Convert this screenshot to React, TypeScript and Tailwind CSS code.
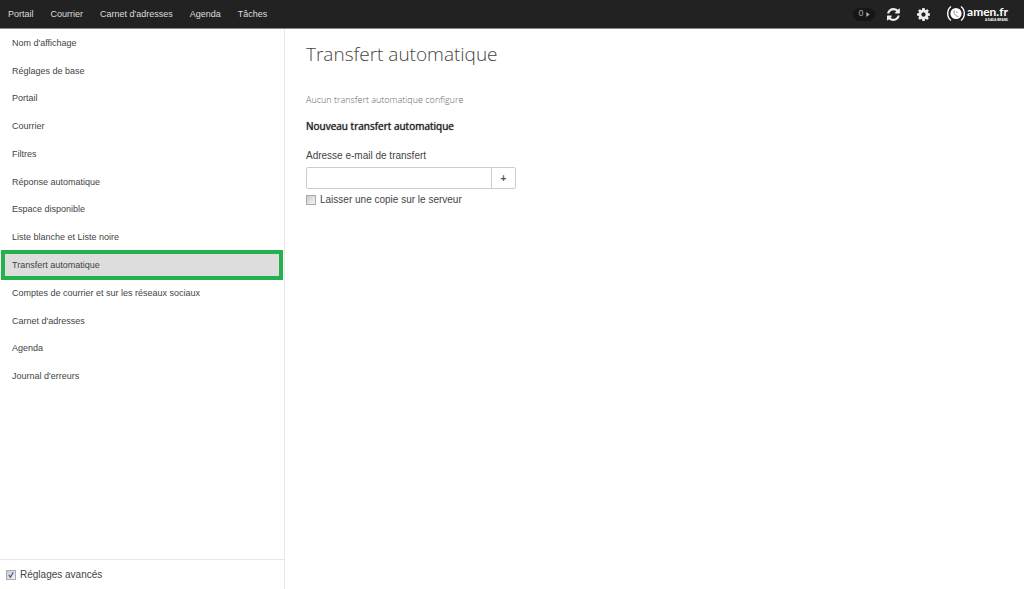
import React, { useState } from 'react';

const topLinks = ['Portail', 'Courrier', "Carnet d'adresses", 'Agenda', 'Tâches'];

const sections = [
  "Nom d'affichage",
  'Réglages de base',
  'Portail',
  'Courrier',
  'Filtres',
  'Réponse automatique',
  'Espace disponible',
  'Liste blanche et Liste noire',
  'Transfert automatique',
  'Comptes de courrier et sur les réseaux sociaux',
  "Carnet d'adresses",
  'Agenda',
  "Journal d'erreurs",
];

const RefreshIcon: React.FC = () => (
  <svg viewBox="0 0 1792 1792" className="w-[15px] h-[15px]" fill="currentColor" aria-hidden="true">
    <path d="M1511 1056q0 5-1 7-64 268-268 434.5t-478 166.5q-146 0-282.5-55t-243.5-157l-129 129q-19 19-45 19t-45-19-19-45v-448q0-26 19-45t45-19h448q26 0 45 19t19 45-19 45l-137 137q71 66 161 102t187 36q134 0 250-65t186-179q11-17 53-117 8-23 30-23h192q13 0 22.5 9.5t9.5 22.5zm25-800v448q0 26-19 45t-45 19h-448q-26 0-45-19t-19-45 19-45l138-138q-148-137-349-137-134 0-250 65t-186 179q-11 17-53 117-8 23-30 23h-199q-13 0-22.5-9.5t-9.5-22.5v-7q65-268 270-434.5t480-166.5q146 0 284 55.5t245 156.5l130-129q19-19 45-19t45 19 19 45z" />
  </svg>
);

const CogIcon: React.FC = () => (
  <svg viewBox="0 0 1792 1792" className="w-[15px] h-[15px]" fill="currentColor" aria-hidden="true">
    <path d="M1152 896q0-106-75-181t-181-75-181 75-75 181 75 181 181 75 181-75 75-181zm512-109v222q0 12-8 23t-20 13l-185 28q-19 54-39 91 35 50 107 138 10 12 10 25t-9 23q-27 37-99 108t-94 71q-12 0-26-9l-138-108q-44 23-91 38-16 136-29 186-7 28-36 28h-222q-14 0-24.5-8.5t-11.5-21.5l-28-184q-49-16-90-37l-141 107q-10 9-25 9-14 0-25-11-126-114-165-168-7-10-7-23 0-12 8-23 15-21 51-66.5t54-70.5q-27-50-41-99l-183-27q-13-2-21-12.5t-8-23.5v-222q0-12 8-23t19-13l186-28q14-46 39-92-40-57-107-138-10-12-10-24 0-10 9-23 26-36 98.5-107.5t94.5-71.5q13 0 26 10l138 107q44-23 91-38 16-136 29-186 7-28 36-28h222q14 0 24.5 8.5t11.5 21.5l28 184q49 16 90 37l142-107q9-9 24-9 13 0 25 10 129 119 165 170 7 8 7 22 0 12-8 23-15 21-51 66.5t-54 70.5q26 50 41 98l183 28q13 2 21 12.5t8 23.5z" />
  </svg>
);

const Logo: React.FC = () => (
  <a href="#" className="flex items-center gap-[2px] text-white">
    <svg viewBox="0 0 18 18" className="w-[18px] h-[18px]" aria-hidden="true">
      <circle cx="9" cy="8.500" r="5.600" fill="currentColor" />
      <path d="M4 1.500C-.4 5-.4 12 4 15.500M14 1.500c4.400 3.500 4.400 10.500 0 14" fill="none" stroke="currentColor" strokeWidth="1.400" />
      <path d="M7.300 5.300c-.8 3.200.8 5.800 4 6.200M9.500 6.500l.8 1.500" fill="none" stroke="#777" strokeWidth="0.900" />
    </svg>
    <span className="flex flex-col items-end">
      <span className="text-[12px] leading-[12px] font-bold font-['Lato',sans-serif]">amen.fr</span>
      <span className="text-[3px] leading-[4px] font-bold">A DADA BRAND</span>
    </span>
  </a>
);

type CheckboxProps = {
  label: string;
  defaultChecked?: boolean;
};

const Checkbox: React.FC<CheckboxProps> = ({ label, defaultChecked = false }) => {
  const [checked, setChecked] = useState(defaultChecked);

  return (
    <label className="flex items-center gap-1 text-[10px] leading-[14px]">
      <span className="relative flex">
        <input
          type="checkbox"
          checked={checked}
          onChange={(e) => setChecked(e.target.checked)}
          className="appearance-none w-[10px] h-[10px] border border-[#aaa] bg-linear-to-br from-[#c8cccf] to-[#f6f6f6]"
        />
        {checked && (
          <svg viewBox="0 0 10 10" className="absolute inset-0 pointer-events-none" aria-hidden="true">
            <path d="M2.800 4.800l1.700 2.500L7.300 2.200" fill="none" stroke="#4a5da8" strokeWidth="1.300" />
          </svg>
        )}
      </span>
      {label}
    </label>
  );
};

const App: React.FC = () => {
  const [active, setActive] = useState('Transfert automatique');

  return (
    <div className="min-h-screen flex flex-col bg-white text-[#444] font-['Liberation_Sans',Arial,sans-serif]">
      {/* Top bar */}
      <header className="h-[29px] shrink-0 flex items-center justify-between pl-2 pr-4 bg-[#222] border-b border-[#888]">
        <nav className="flex gap-[17px] text-[9px] leading-[14px] text-[#ddd]">
          {topLinks.map((link) => (
            <a key={link} href="#">{link}</a>
          ))}
        </nav>
        <div className="flex items-center text-[#eee]">
          <button type="button" className="flex items-center justify-center gap-[2px] w-[22px] h-[13px] mr-3 rounded-full bg-[#161616] text-[9px] text-[#aaa]">
            0
            <svg viewBox="0 0 4 6" className="w-[4px] h-[5px]" fill="currentColor" aria-hidden="true">
              <path d="M0 0l4 3-4 3z" />
            </svg>
          </button>
          <button type="button" aria-label="Actualiser" className="mr-[14px]"><RefreshIcon /></button>
          <button type="button" aria-label="Réglages" className="mr-4"><CogIcon /></button>
          <Logo />
        </div>
      </header>

      <div className="flex-1 flex">
        {/* Settings menu */}
        <aside className="w-[285px] shrink-0 flex flex-col justify-between border-r border-[#e8e8e8]">
          <ul className="h-[361px] flex flex-col text-[9px] leading-[14px]">
            {sections.map((section) => (
              <li key={section} className="flex-1 flex px-[2px]">
                <button
                  type="button"
                  onClick={() => setActive(section)}
                  className={
                    section === active
                      ? 'flex-1 px-[10px] text-left bg-[#ddd] outline-4 -outline-offset-3 outline-[#22b14c]'
                      : 'flex-1 px-[10px] text-left'
                  }
                >
                  {section}
                </button>
              </li>
            ))}
          </ul>
          <div className="h-[30px] flex items-center px-[6px] border-t border-[#e8e8e8]">
            <Checkbox label="Réglages avancés" defaultChecked />
          </div>
        </aside>

        {/* Forwarding form */}
        <main className="flex-1 px-[21px] pt-3">
          <h1 className="text-[19px] leading-[26px] font-light font-['Open_Sans',sans-serif]">Transfert automatique</h1>
          <p className="mt-[26px] text-[9px] leading-[14px] font-light text-[#666] font-['Open_Sans',sans-serif]">
            Aucun transfert automatique configure
          </p>
          <h2 className="mt-3 text-[10px] leading-[14px] font-medium text-[#222] [text-shadow:0_0_1px_#222] font-['Open_Sans',sans-serif]">
            Nouveau transfert automatique
          </h2>
          <form className="mt-4" onSubmit={(e) => e.preventDefault()}>
            <label htmlFor="forward" className="block text-[10px] leading-[14px]">Adresse e-mail de transfert</label>
            <div className="flex w-[210px] h-[22px] my-1 border border-[#ccc] rounded-[2px]">
              <input id="forward" type="email" className="flex-1 min-w-0 px-1 text-[10px] outline-none" />
              <button type="button" aria-label="Ajouter" className="w-6 border-l border-[#ccc] text-[10px] font-bold text-[#456]">+</button>
            </div>
            <Checkbox label="Laisser une copie sur le serveur" />
          </form>
        </main>
      </div>
    </div>
  );
};

export default App;
